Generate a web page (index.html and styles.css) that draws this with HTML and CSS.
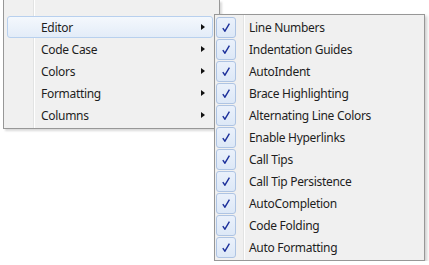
FILE: index.html
```html
<!DOCTYPE html>
<html lang="en">
<head>
    <meta charset="UTF-8">
    <title>Menu</title>
    <link rel="stylesheet" href="styles.css">
</head>
<body>

<div class="menus">
    <div class="menu">
        <div class="menu-item active">Editor<span class="arrow"></span></div>
        <div class="menu-item">Code Case<span class="arrow"></span></div>
        <div class="menu-item">Colors<span class="arrow"></span></div>
        <div class="menu-item">Formatting<span class="arrow"></span></div>
        <div class="menu-item">Columns<span class="arrow"></span></div>
    </div>

    <div class="submenu">
        <div class="sub-item"><span class="check"><svg width="8" height="9" viewBox="0 0 8 9"><path d="M0.8 5.2 L2.9 8.2 L7.4 0.6" fill="none" stroke="#1b2f9a" stroke-width="1.4"/></svg></span>Line Numbers</div>
        <div class="sub-item"><span class="check"><svg width="8" height="9" viewBox="0 0 8 9"><path d="M0.8 5.2 L2.9 8.2 L7.4 0.6" fill="none" stroke="#1b2f9a" stroke-width="1.4"/></svg></span>Indentation Guides</div>
        <div class="sub-item"><span class="check"><svg width="8" height="9" viewBox="0 0 8 9"><path d="M0.8 5.2 L2.9 8.2 L7.4 0.6" fill="none" stroke="#1b2f9a" stroke-width="1.4"/></svg></span>AutoIndent</div>
        <div class="sub-item"><span class="check"><svg width="8" height="9" viewBox="0 0 8 9"><path d="M0.8 5.2 L2.9 8.2 L7.4 0.6" fill="none" stroke="#1b2f9a" stroke-width="1.4"/></svg></span>Brace Highlighting</div>
        <div class="sub-item"><span class="check"><svg width="8" height="9" viewBox="0 0 8 9"><path d="M0.8 5.2 L2.9 8.2 L7.4 0.6" fill="none" stroke="#1b2f9a" stroke-width="1.4"/></svg></span>Alternating Line Colors</div>
        <div class="sub-item"><span class="check"><svg width="8" height="9" viewBox="0 0 8 9"><path d="M0.8 5.2 L2.9 8.2 L7.4 0.6" fill="none" stroke="#1b2f9a" stroke-width="1.4"/></svg></span>Enable Hyperlinks</div>
        <div class="sub-item"><span class="check"><svg width="8" height="9" viewBox="0 0 8 9"><path d="M0.8 5.2 L2.9 8.2 L7.4 0.6" fill="none" stroke="#1b2f9a" stroke-width="1.4"/></svg></span>Call Tips</div>
        <div class="sub-item"><span class="check"><svg width="8" height="9" viewBox="0 0 8 9"><path d="M0.8 5.2 L2.9 8.2 L7.4 0.6" fill="none" stroke="#1b2f9a" stroke-width="1.4"/></svg></span>Call Tip Persistence</div>
        <div class="sub-item"><span class="check"><svg width="8" height="9" viewBox="0 0 8 9"><path d="M0.8 5.2 L2.9 8.2 L7.4 0.6" fill="none" stroke="#1b2f9a" stroke-width="1.4"/></svg></span>AutoCompletion</div>
        <div class="sub-item"><span class="check"><svg width="8" height="9" viewBox="0 0 8 9"><path d="M0.8 5.2 L2.9 8.2 L7.4 0.6" fill="none" stroke="#1b2f9a" stroke-width="1.4"/></svg></span>Code Folding</div>
        <div class="sub-item"><span class="check"><svg width="8" height="9" viewBox="0 0 8 9"><path d="M0.8 5.2 L2.9 8.2 L7.4 0.6" fill="none" stroke="#1b2f9a" stroke-width="1.4"/></svg></span>Auto Formatting</div>
    </div>
</div>

</body>
</html>
```

FILE: styles.css
```css
body {
    margin: 0;
    padding: 0;
    background-color: #ffffff;
    font-family: 'Noto Sans', 'Open Sans', sans-serif;
    font-size: 12px;
    letter-spacing: -0.3px;
    color: #1e1e1e;
}

.menus {
    display: flex;
    align-items: flex-start;
    padding-left: 3px;
}

/* main context menu, top edge is cut off by the screenshot */
.menu {
    position: relative;
    width: 211px;
    padding: 16px 2px 2px 2px;
    background-color: #f0f0f0;
    background-image: linear-gradient(to right, transparent 29px, #e2e3e3 29px, #e2e3e3 30px, #ffffff 30px, #ffffff 31px, transparent 31px);
    border: 1px solid #979797;
    border-top: none;
    box-shadow: 2px 2px 2px rgba(0, 0, 0, 0.15);
}

.menu-item {
    position: relative;
    height: 22px;
    line-height: 21px;
    margin: 0 4px 0 1px;
    padding-left: 33px;
    box-sizing: border-box;
    border: 1px solid transparent;
    border-radius: 3px;
}

.menu-item.active {
    background: linear-gradient(to bottom, #f4f8fd, #e3ecf8);
    border-color: #b8d0ee;
}

.arrow {
    position: absolute;
    right: 7px;
    top: 7px;
    width: 0;
    height: 0;
    border-top: 3.5px solid transparent;
    border-bottom: 3.5px solid transparent;
    border-left: 4px solid #111111;
}

/* submenu opened next to "Editor", overlapping the main menu edge */
.submenu {
    position: relative;
    z-index: 1;
    width: 206px;
    margin-left: -6px;
    margin-top: 14px;
    padding: 1px 2px 2px 1px;
    background-color: #f0f0f0;
    background-image: linear-gradient(to right, transparent 28px, #e2e3e3 28px, #e2e3e3 29px, #ffffff 29px, #ffffff 30px, transparent 30px);
    border: 1px solid #979797;
    box-shadow: 2px 2px 3px rgba(0, 0, 0, 0.2);
}

.sub-item {
    display: flex;
    align-items: center;
    height: 22px;
}

.check {
    display: flex;
    align-items: center;
    justify-content: center;
    width: 18px;
    height: 19px;
    margin-right: 13px;
    background: linear-gradient(to bottom, #eaf1fb, #dde8f7);
    border: 1px solid #aec4e3;
    border-radius: 3px;
}
```
